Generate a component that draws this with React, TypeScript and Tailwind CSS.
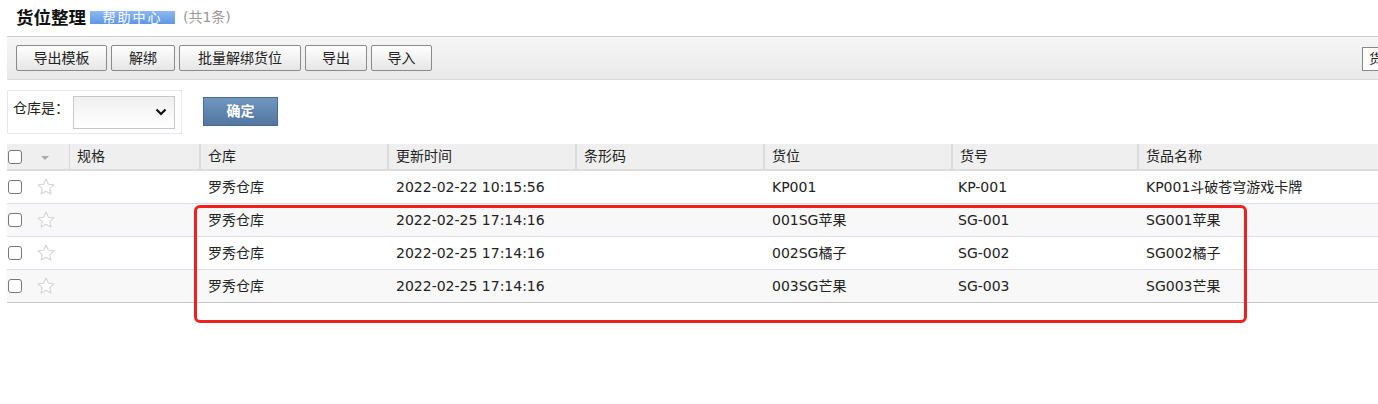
import React from "react";

const rows = [
  { wh: "罗秀仓库", time: "2022-02-22 10:15:56", loc: "KP001", no: "KP-001", name: "KP001斗破苍穹游戏卡牌" },
  { wh: "罗秀仓库", time: "2022-02-25 17:14:16", loc: "001SG苹果", no: "SG-001", name: "SG001苹果" },
  { wh: "罗秀仓库", time: "2022-02-25 17:14:16", loc: "002SG橘子", no: "SG-002", name: "SG002橘子" },
  { wh: "罗秀仓库", time: "2022-02-25 17:14:16", loc: "003SG芒果", no: "SG-003", name: "SG003芒果" },
];

const cols = "grid grid-cols-[63px_131px_188px_188px_188px_188px_186px_1fr]";

const Box = () => (
  <span className="w-[14px] h-[14px] border border-[#777] rounded-[3px] bg-white inline-block" />
);

const Star = () => (
  <svg width="20" height="20" viewBox="0 0 24 24" className="ml-[14px]">
    <path
      d="M12 2.5l2.9 6.2 6.6.7-5 4.5 1.4 6.6L12 17.2l-5.9 3.3 1.4-6.6-5-4.5 6.6-.7z"
      fill="#fff"
      stroke="#d6d6d6"
      strokeWidth="1.4"
      strokeLinejoin="round"
    />
  </svg>
);

const Btn = ({ label, w }: { label: string; w: string }) => (
  <button
    className={`${w} h-[26px] border border-[#8a8a8a] rounded-[2px] bg-gradient-to-b from-white to-[#e6e6e6] text-[14px] text-[#222] flex items-center justify-center`}
  >
    {label}
  </button>
);

const App = () => {
  return (
    <div
      className="w-[1378px] h-[404px] bg-white overflow-hidden relative text-[#222]"
      style={{ fontFamily: '"DejaVu Sans", "Noto Sans CJK SC", sans-serif' }}
    >
      {/* HEADER */}
      <div className="flex items-center h-[34px] pl-[16px]">
        <span className="text-[17.5px] font-bold text-[#111] font-['Noto_Sans_CJK_SC']">货位整理</span>
        <span className="ml-[4px] h-[13px] w-[85px] bg-gradient-to-b from-[#8fb8ef] to-[#5f97e4] text-white text-[13px] leading-[13px] text-center tracking-[2px]">
          帮助中心
        </span>
        <span className="ml-[8px] text-[14px] text-[#999]">(共1条)</span>
      </div>

      {/* TOOLBAR */}
      <div className="ml-[7px] mt-[2px] h-[44px] border-t border-[#d0d0d0] border-b border-b-[#dcdcdc] bg-gradient-to-b from-[#f6f6f6] to-[#e9e9e9] flex items-center pl-[9px] gap-[4px] relative">
        <Btn label="导出模板" w="w-[91px]" />
        <Btn label="解绑" w="w-[64px]" />
        <Btn label="批量解绑货位" w="w-[122px]" />
        <Btn label="导出" w="w-[62px]" />
        <Btn label="导入" w="w-[61px]" />
        <div className="absolute left-[1355px] top-[10px] w-[40px] h-[24px] border border-[#888] bg-white pl-[6px] text-[13px] leading-[22px] overflow-hidden">
          货
        </div>
      </div>

      {/* FILTER */}
      <div className="flex items-center mt-[10px]">
        <div className="ml-[7px] w-[175px] h-[44px] border border-[#e8e8f0] flex items-center pl-[5px]">
          <span className="text-[14px] mr-[4px] -mt-[7px]">仓库是：</span>
          <div className="w-[102px] h-[33px] border border-[#c8c8c8] bg-gradient-to-b from-[#f0f0f0] to-white flex items-center justify-end pr-[7px]">
            <svg width="12" height="8" viewBox="0 0 12 8">
              <path d="M1.5 1.5L6 6l4.5-4.5" fill="none" stroke="#111" strokeWidth="2.2" />
            </svg>
          </div>
        </div>
        <button className="ml-[21px] -mt-[2px] w-[75px] h-[29px] bg-gradient-to-b from-[#7196c0] to-[#52769f] border border-[#4a6a90] text-white text-[14px] font-bold">
          确定
        </button>
      </div>

      {/* TABLE */}
      <div className="ml-[7px] mt-[10px] text-[14px]">
        <div className={`${cols} h-[27px] bg-[#efefef] border-b-2 border-[#dcdcdc]`}>
          <div className="flex items-center pl-[1px] border-r border-[#d8d8d8]">
            <Box />
            <svg width="10" height="6" viewBox="0 0 10 6" className="ml-[18px] mt-[3px]">
              <path d="M1 1h8L5 5z" fill="#aaa" />
            </svg>
          </div>
          {["规格", "仓库", "更新时间", "条形码", "货位", "货号", "货品名称"].map((h, i) => (
            <div
              key={h}
              className={`flex items-center pl-[7px] ${i < 6 ? "border-r-2 border-[#dcdcdc]" : ""}`}
            >
              {h}
            </div>
          ))}
        </div>
        {rows.map((r, i) => (
          <div
            key={i}
            className={`${cols} h-[33px] border-b border-[#dadde3] ${i % 2 === 1 ? "bg-[#f8f8f8]" : "bg-white"} ${i === 3 ? "border-b-[#c8c8c8]" : ""}`}
          >
            <div className="flex items-center pl-[1px]">
              <Box />
              <Star />
            </div>
            <div />
            <div className="flex items-center pl-[7px]">{r.wh}</div>
            <div className="flex items-center pl-[7px]">{r.time}</div>
            <div />
            <div className="flex items-center pl-[7px]">{r.loc}</div>
            <div className="flex items-center pl-[5px]">{r.no}</div>
            <div className="flex items-center pl-[7px]">{r.name}</div>
          </div>
        ))}
      </div>

      {/* HIGHLIGHT */}
      <div className="absolute left-[194px] top-[205px] w-[1053px] h-[118px] border-[3px] border-[#f02020] rounded-[6px] pointer-events-none" />
    </div>
  );
};

export default App;
